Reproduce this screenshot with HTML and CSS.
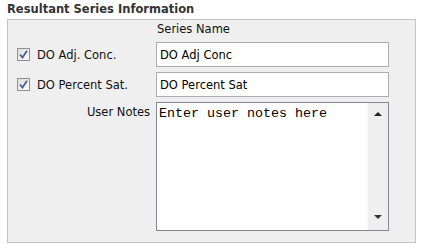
FILE: index.html
```html
<!DOCTYPE html>
<html lang="en">
<head>
    <meta charset="UTF-8">
    <title>Resultant Series Information</title>
    <link rel="stylesheet" href="styles.css">
</head>
<body>
    <h1 class="title">Resultant Series Information</h1>

    <div class="panel">
        <div class="form-grid">
            <span></span>
            <div class="col-head">Series Name</div>

            <label class="check">
                <span class="box">
                    <svg width="11" height="11" viewBox="0 0 11 11"><path d="M2 5.5 L4.5 8.5 L9 1.8" fill="none" stroke="#4a5f92" stroke-width="1.9"/></svg>
                </span>
                DO Adj. Conc.
            </label>
            <input class="field" type="text" value="DO Adj Conc">

            <label class="check">
                <span class="box">
                    <svg width="11" height="11" viewBox="0 0 11 11"><path d="M2 5.5 L4.5 8.5 L9 1.8" fill="none" stroke="#4a5f92" stroke-width="1.9"/></svg>
                </span>
                DO Percent Sat.
            </label>
            <input class="field" type="text" value="DO Percent Sat">

            <label class="notes-label">User Notes</label>
            <div class="notes">
                <textarea class="notes-text">Enter user notes here</textarea>
                <div class="scrollbar">
                    <span class="arrow up"></span>
                    <span class="arrow down"></span>
                </div>
            </div>
        </div>
    </div>
</body>
</html>
```

FILE: styles.css
```css
body {
    margin: 0;
    background: #ffffff;
    font-family: "DejaVu Sans", Verdana, sans-serif;
    font-size: 11.5px;
    color: #111;
}

.title {
    margin: 0;
    padding-left: 7px;
    font-size: 11.5px;
    line-height: 19px;
    font-weight: bold;
    color: #333;
}

.panel {
    margin-left: 7px;
    width: 409px;
    height: 224px;
    box-sizing: border-box;
    border: 1px solid #c4c4c4;
    background: #efefef;
    padding: 2px 0 0 9px;
}

.form-grid {
    display: grid;
    grid-template-columns: 133px 233px;
    grid-template-rows: 15px 25px 25px 129px;
    column-gap: 6px;
    row-gap: 5px;
}

.col-head {
    line-height: 15px;
    padding-left: 1px;
}

.check {
    display: flex;
    align-items: center;
    gap: 7px;
    white-space: nowrap;
}

.box {
    width: 13px;
    height: 13px;
    box-sizing: border-box;
    border: 1px solid #8e8f8f;
    background: linear-gradient(135deg, #dcdcdc, #ffffff);
    display: flex;
    align-items: center;
    justify-content: center;
}

.field {
    margin: 0;
    height: 25px;
    box-sizing: border-box;
    border: 1px solid #adadad;
    padding: 0 3px;
    font-family: "DejaVu Sans", Verdana, sans-serif;
    font-size: 11.5px;
    color: #000;
    background: #fff;
    outline: none;
}

.notes-label {
    text-align: right;
    line-height: 14px;
    padding-top: 3px;
}

.notes {
    display: flex;
    border: 1px solid #858890;
    background: #fff;
}

.notes-text {
    flex: 1;
    margin: 0;
    border: 0;
    padding: 3px 2px;
    resize: none;
    overflow: hidden;
    font-family: "Liberation Mono", "Courier New", monospace;
    font-size: 13.33px;
    color: #000;
    outline: none;
}

.scrollbar {
    width: 20px;
    background: #efefef;
    border-left: 1px solid #f8f8f8;
    display: flex;
    flex-direction: column;
    justify-content: space-between;
    align-items: center;
    padding: 9px 0 11px;
}

.arrow {
    width: 0;
    height: 0;
    border-left: 4px solid transparent;
    border-right: 4px solid transparent;
}

.arrow.up {
    border-bottom: 4px solid #222;
}

.arrow.down {
    border-top: 4px solid #333;
}
```
